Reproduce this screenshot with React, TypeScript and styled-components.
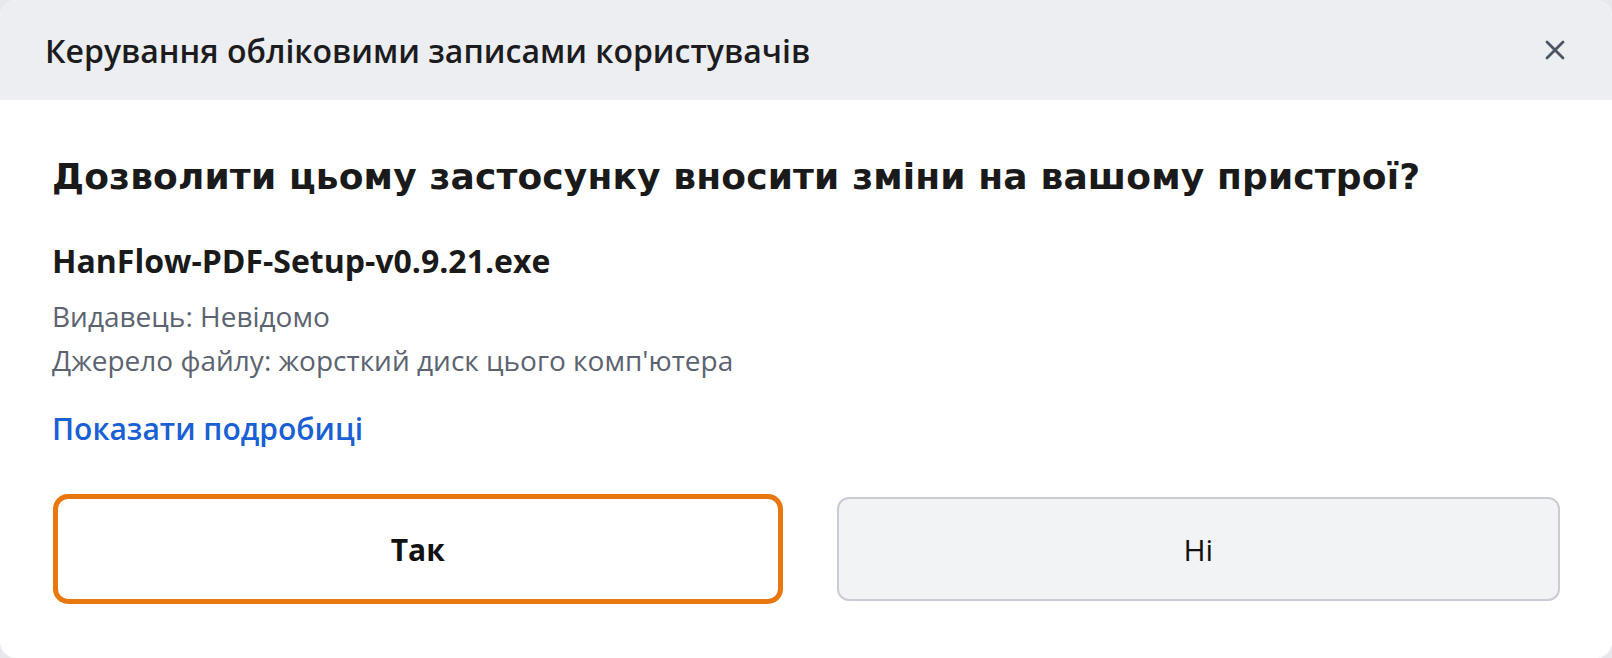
import styled, { createGlobalStyle } from "styled-components";

const GlobalStyle = createGlobalStyle`
  html, body {
    margin: 0;
    padding: 0;
    background: #e6e8ec;
  }
  body {
    font-family: "Open Sans", "Noto Sans", sans-serif;
  }
  * {
    box-sizing: border-box;
  }
`;

const Dialog = styled.div`
  width: 1612px;
  height: 658px;
  background: #ffffff;
  border-radius: 16px;
  overflow: hidden;
  display: flex;
  flex-direction: column;
`;

const TitleBar = styled.header`
  height: 100px;
  flex-shrink: 0;
  background: #eceef2;
  display: flex;
  align-items: center;
  justify-content: space-between;
  padding: 0 41px 0 45px;
`;

const TitleText = styled.h1`
  margin: 0;
  font-size: 32px;
  font-weight: 600;
  color: #1c1c1e;
`;

const CloseButton = styled.button`
  width: 32px;
  height: 32px;
  border: none;
  background: transparent;
  padding: 0;
  display: flex;
  align-items: center;
  justify-content: center;
  cursor: pointer;
`;

const Body = styled.main`
  flex: 1;
  display: flex;
  flex-direction: column;
  padding: 52px 52px 0 52px;
`;

const Question = styled.h2`
  margin: 0;
  font-family: "DejaVu Sans", sans-serif;
  font-size: 36px;
  font-weight: 700;
  line-height: 50px;
  letter-spacing: 0.15px;
  color: #1a1a1a;
`;

const FileName = styled.div`
  margin-top: 39px;
  font-size: 32px;
  font-weight: 700;
  line-height: 40px;
  color: #1a1a1a;
`;

const InfoList = styled.div`
  margin-top: 13px;
  display: flex;
  flex-direction: column;
`;

const InfoLine = styled.div`
  font-size: 28px;
  line-height: 44px;
  color: #5c6370;
`;

const DetailsLink = styled.a`
  margin-top: 27px;
  font-size: 30px;
  font-weight: 600;
  line-height: 40px;
  color: #1a5fd4;
  text-decoration: none;
  cursor: pointer;
  align-self: flex-start;
`;

const Actions = styled.div`
  margin-top: 48px;
  display: grid;
  grid-template-columns: 1fr 1fr;
  gap: 57px;
  padding-left: 4px;
`;

const ActionButton = styled.button<{ $primary?: boolean }>`
  height: 104px;
  border-radius: 12px;
  font-family: "Open Sans", "Noto Sans", sans-serif;
  font-size: 30px;
  color: #111111;
  cursor: pointer;
  background: ${({ $primary }) => ($primary ? "#ffffff" : "#f2f3f5")};
  border: 2px solid ${({ $primary }) => ($primary ? "#e8770f" : "#c9ccd4")};
  font-weight: ${({ $primary }) => ($primary ? 700 : 400)};
  box-shadow: ${({ $primary }) => ($primary ? "0 0 0 3px #e8770f" : "none")};
`;

export default function App() {
  return (
    <>
      <GlobalStyle />
      <Dialog>
        <TitleBar>
          <TitleText>Керування обліковими записами користувачів</TitleText>
          <CloseButton aria-label="Закрити">
            <svg width="20" height="20" viewBox="0 0 20 20">
              <path
                d="M2 2 L18 18 M18 2 L2 18"
                stroke="#4b5563"
                strokeWidth="2.8"
                strokeLinecap="round"
              />
            </svg>
          </CloseButton>
        </TitleBar>
        <Body>
          <Question>Дозволити цьому застосунку вносити зміни на вашому пристрої?</Question>
          <FileName>HanFlow-PDF-Setup-v0.9.21.exe</FileName>
          <InfoList>
            <InfoLine>Видавець: Невідомо</InfoLine>
            <InfoLine>Джерело файлу: жорсткий диск цього комп'ютера</InfoLine>
          </InfoList>
          <DetailsLink>Показати подробиці</DetailsLink>
          <Actions>
            <ActionButton $primary>Так</ActionButton>
            <ActionButton>Ні</ActionButton>
          </Actions>
        </Body>
      </Dialog>
    </>
  );
}
